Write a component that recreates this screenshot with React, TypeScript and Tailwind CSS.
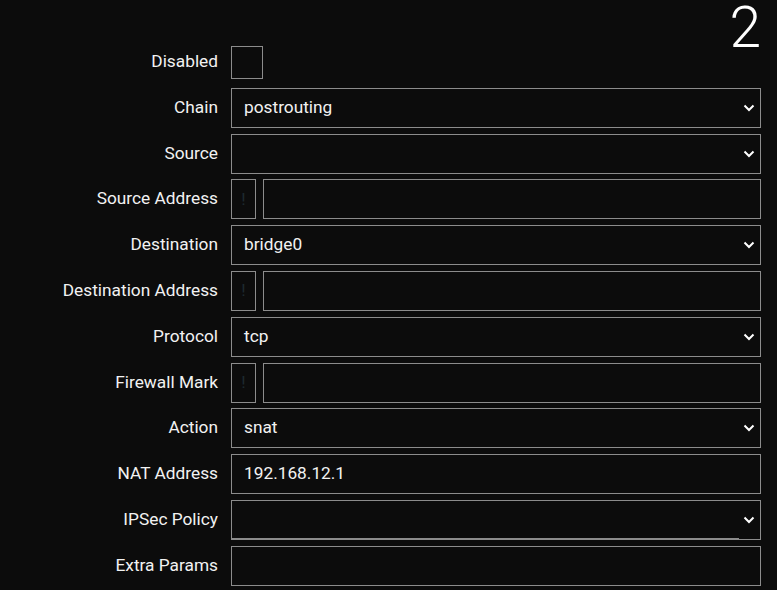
import { ReactNode } from "react";

const Chevron = () => (
  <svg width="12" height="8" viewBox="0 0 12 8" className="absolute right-[5px] top-1/2 -translate-y-1/2">
    <path d="M1.5 1.5 L6 6 L10.5 1.5" stroke="#ffffff" strokeWidth="2" fill="none" />
  </svg>
);

function Row({ label, children }: { label: string; children: ReactNode }) {
  return (
    <div className="flex items-center h-10">
      <div className="w-[218px] text-right text-[17.3px] text-[#f2f2f2]">{label}</div>
      <div className="flex-1 ml-[13px] mr-[16px] h-full flex">{children}</div>
    </div>
  );
}

function Select({ value, extraBar }: { value?: string; extraBar?: boolean }) {
  return (
    <div className="relative flex-1 h-full border border-[#8c8c8c] flex items-center pl-[12px] text-[17.3px] text-[#f2f2f2]">
      {value}
      <Chevron />
      {extraBar && <div className="absolute left-0 bottom-[-1px] w-[507px] h-[2px] bg-[#8c8c8c]" />}
    </div>
  );
}

function TextInput({ value }: { value?: string }) {
  return (
    <div className="flex-1 h-full border border-[#8c8c8c] flex items-center pl-[12px] text-[17.3px] text-[#f2f2f2]">
      {value}
    </div>
  );
}

function InvertInput() {
  return (
    <>
      <div className="w-[25px] h-full border border-[#8c8c8c] flex items-center justify-center text-[17px] text-[#1e2a30]">
        !
      </div>
      <div className="flex-1 ml-[7px] h-full border border-[#8c8c8c]" />
    </>
  );
}

export default function App() {
  return (
    <div className="w-full h-[590px] bg-[#0c0c0c] overflow-hidden" style={{ fontFamily: "Roboto, sans-serif" }}>
      <div className="flex justify-end items-start pr-[16px] h-[42px]">
        <span className="text-[57px] font-light leading-[56px] text-white">2</span>
      </div>
      <div className="flex flex-col gap-[5.8px]">
        <div className="flex items-center h-10">
          <div className="w-[218px] text-right text-[17.3px] text-[#f2f2f2]">Disabled</div>
          <div className="ml-[13px] w-[32px] h-[33px] border border-[#8c8c8c]" />
        </div>
        <Row label="Chain"><Select value="postrouting" /></Row>
        <Row label="Source"><Select /></Row>
        <Row label="Source Address"><InvertInput /></Row>
        <Row label="Destination"><Select value="bridge0" /></Row>
        <Row label="Destination Address"><InvertInput /></Row>
        <Row label="Protocol"><Select value="tcp" /></Row>
        <Row label="Firewall Mark"><InvertInput /></Row>
        <Row label="Action"><Select value="snat" /></Row>
        <Row label="NAT Address"><TextInput value="192.168.12.1" /></Row>
        <Row label="IPSec Policy"><Select extraBar /></Row>
        <Row label="Extra Params"><TextInput /></Row>
      </div>
    </div>
  );
}
